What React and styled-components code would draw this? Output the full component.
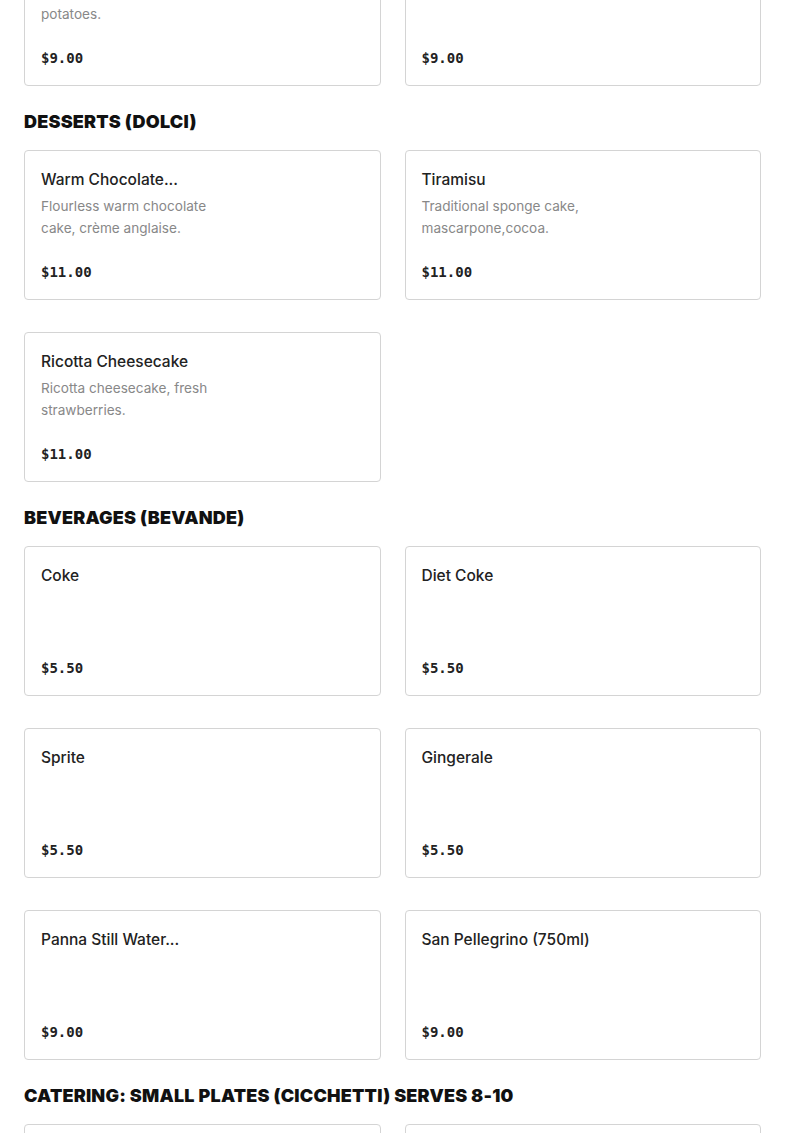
import styled, { createGlobalStyle } from 'styled-components';

const GlobalStyle = createGlobalStyle`
  html, body {
    margin: 0;
    padding: 0;
    background: #fff;
    overflow: hidden;
  }
  body {
    font-family: Inter, "Liberation Sans", sans-serif;
    color: #222;
  }
`;

const Page = styled.div`
  padding: 0 24px;
  margin-top: -64px;
`;

const Section = styled.section`
  display: flex;
  flex-direction: column;
`;

const Heading = styled.h2`
  margin: 24px 0 16px;
  font-family: Inter, "Liberation Sans", sans-serif;
  font-size: 18px;
  line-height: 24px;
  font-weight: 900;
  letter-spacing: 0.2px;
  color: #111;
  text-transform: uppercase;
`;

const Grid = styled.div`
  display: grid;
  grid-template-columns: 1fr 1fr;
  column-gap: 24px;
  row-gap: 32px;
`;

const Card = styled.div`
  box-sizing: border-box;
  height: 150px;
  border: 1px solid #d4d4d4;
  border-radius: 4px;
  padding: 16px;
  display: flex;
  flex-direction: column;
`;

const Title = styled.div`
  margin-top: 1px;
  font-size: 15.5px;
  line-height: 24px;
  font-weight: 500;
  color: #222;
  white-space: nowrap;
`;

const Desc = styled.div`
  margin-top: 3px;
  max-width: 195px;
  font-size: 13.6px;
  line-height: 22px;
  color: #888;
`;

const Price = styled.div`
  margin-top: auto;
  font-family: "DejaVu Sans Mono", "Liberation Mono", monospace;
  font-size: 14px;
  line-height: 22px;
  font-weight: 700;
  color: #222;
`;

const sections = [
  {
    items: [
      { name: 'Roasted Potatoes', desc: 'Rosemary and garlic roasted potatoes.', price: '$9.00' },
      { name: 'Sautéed Spinach', price: '$9.00' },
    ],
  },
  {
    title: 'Desserts (Dolci)',
    items: [
      { name: 'Warm Chocolate...', desc: 'Flourless warm chocolate cake, crème anglaise.', price: '$11.00' },
      { name: 'Tiramisu', desc: 'Traditional sponge cake, mascarpone,cocoa.', price: '$11.00' },
      { name: 'Ricotta Cheesecake', desc: 'Ricotta cheesecake, fresh strawberries.', price: '$11.00' },
    ],
  },
  {
    title: 'Beverages (Bevande)',
    items: [
      { name: 'Coke', price: '$5.50' },
      { name: 'Diet Coke', price: '$5.50' },
      { name: 'Sprite', price: '$5.50' },
      { name: 'Gingerale', price: '$5.50' },
      { name: 'Panna Still Water...', price: '$9.00' },
      { name: 'San Pellegrino (750ml)', price: '$9.00' },
    ],
  },
  {
    title: 'Catering: Small Plates (Cicchetti) Serves 8-10',
    items: [
      { name: 'Arancini', desc: 'Crispy risotto balls, mozzarella, marinara.', price: '$65.00' },
      { name: 'Meatballs', desc: 'Beef and pork meatballs, tomato sauce.', price: '$70.00' },
    ],
  },
];

export default function App() {
  return (
    <>
      <GlobalStyle />
      <Page>
        {sections.map((s, i) => (
          <Section key={i}>
            {s.title && <Heading>{s.title}</Heading>}
            <Grid>
              {s.items.map((it) => (
                <Card key={it.name}>
                  <Title>{it.name}</Title>
                  {it.desc && <Desc>{it.desc}</Desc>}
                  <Price>{it.price}</Price>
                </Card>
              ))}
            </Grid>
          </Section>
        ))}
      </Page>
    </>
  );
}
